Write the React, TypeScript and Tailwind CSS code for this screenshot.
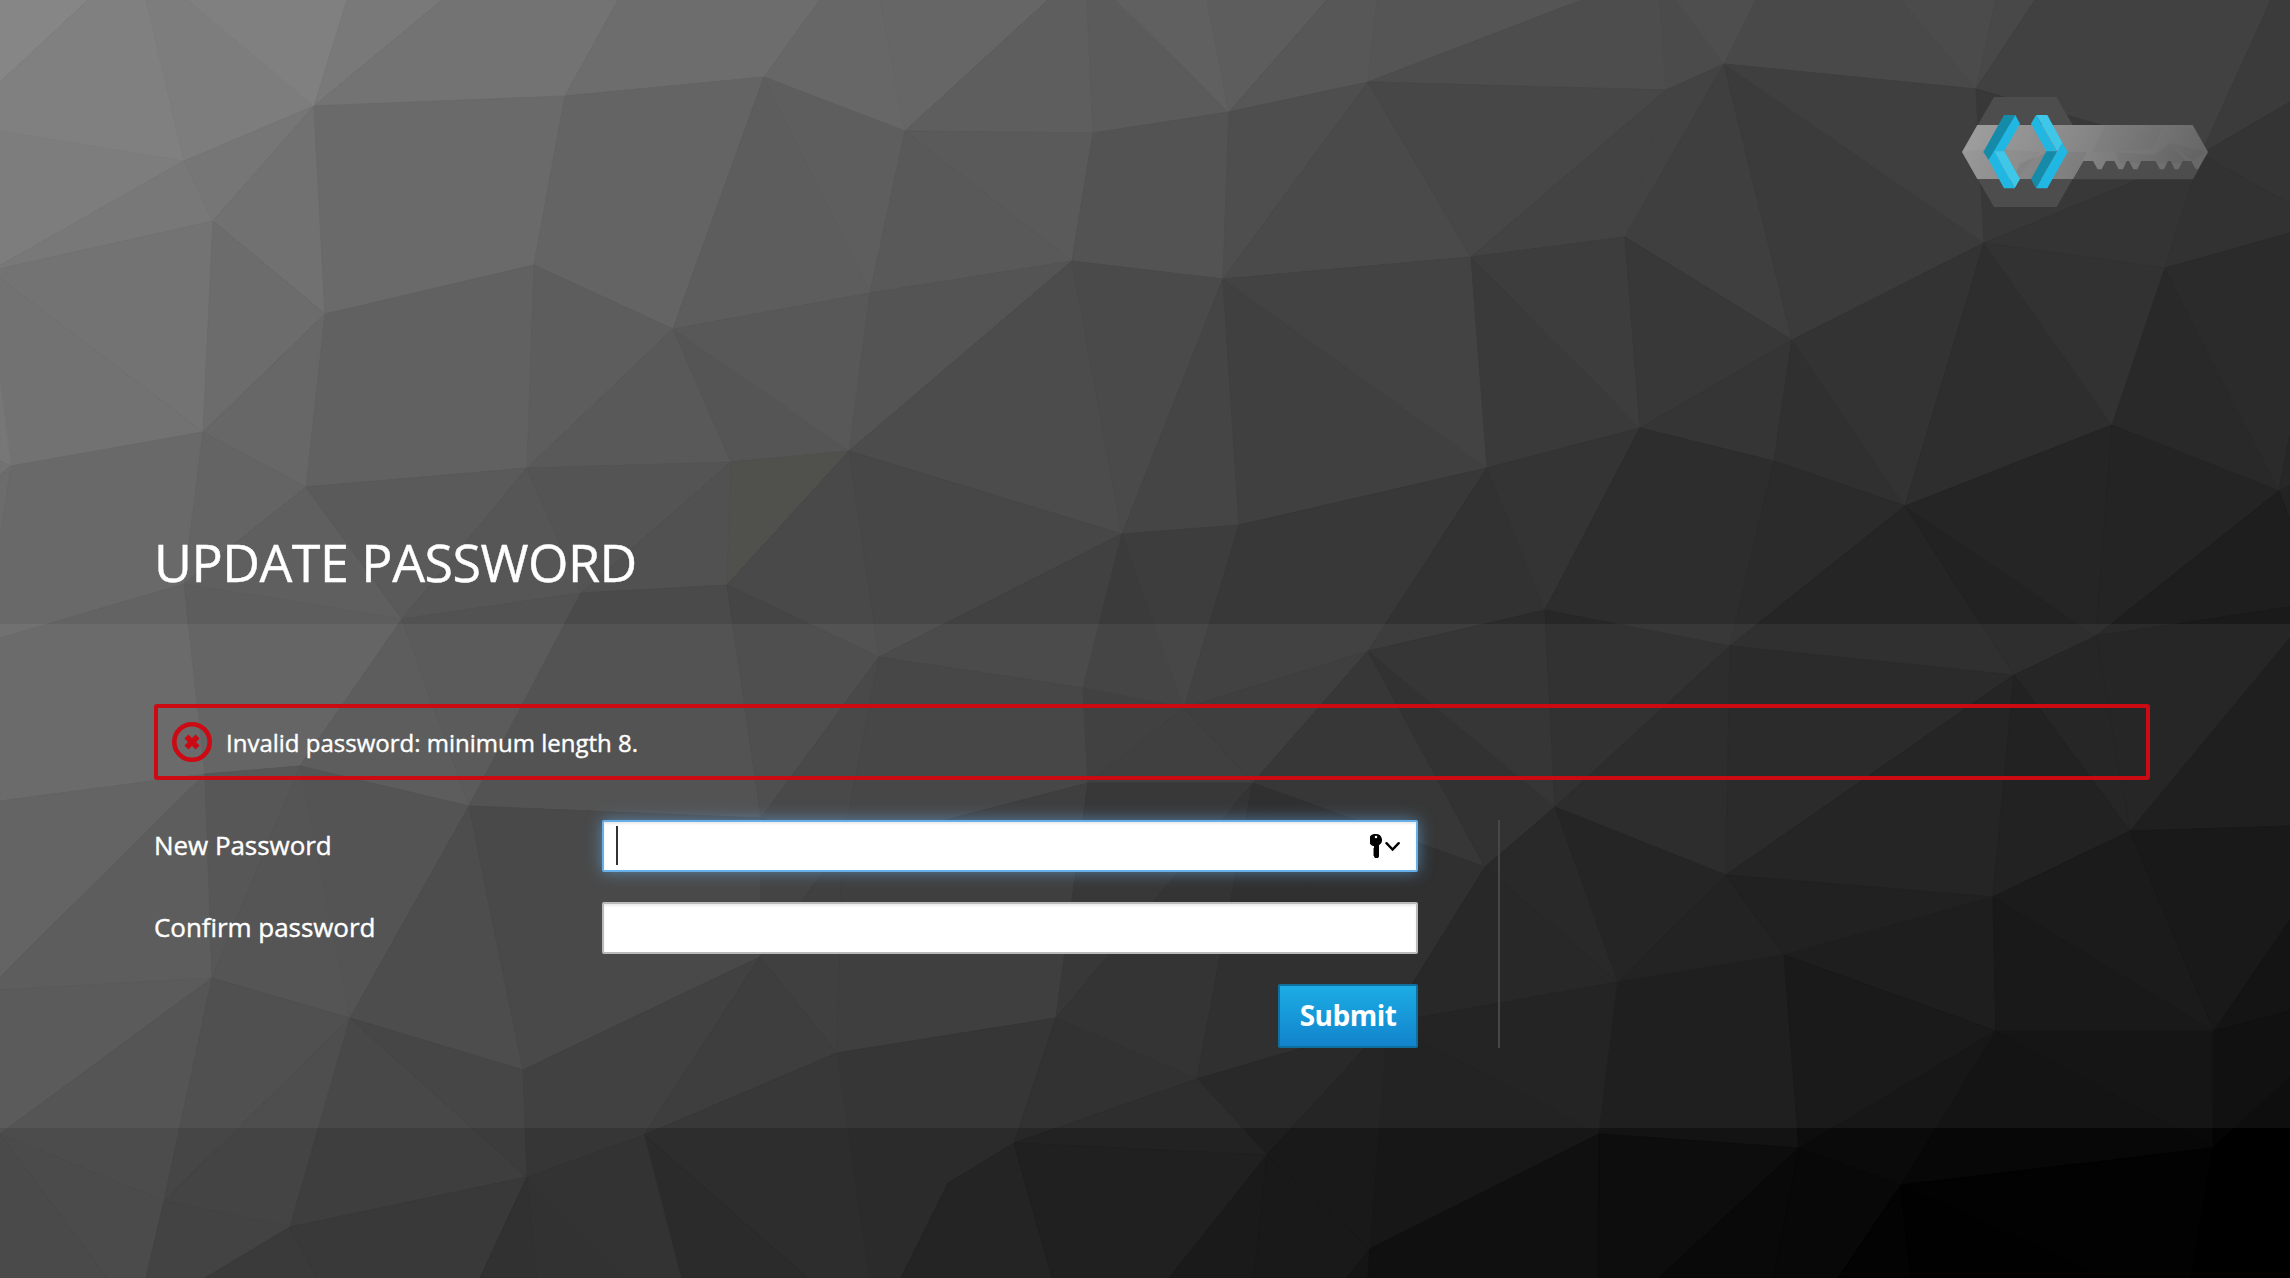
import React from "react";

const W = 2290;
const H = 1278;

// Mesh vertices of the low-poly backdrop.
const V: Record<string, [number, number]> = {
  B: [184, 161], C: [314, 106], D: [213, 221], E: [-10, 271], F: [325, 314], G: [565, 96], H: [764, 77],
  I: [534, 265], J: [673, 329], K: [203, 432], L: [11, 466], N: [306, 487], O: [527, 468], P: [731, 462],
  Q: [402, 619], R: [184, 584], T: [581, 593], U: [727, 585], W: [849, 451], X: [870, 293], Y: [879, 657],
  Z: [205, 774], AA: [300, 766], AB: [469, 806], AC: [761, 818], AD: [760, 957], AE: [523, 1070],
  AF: [212, 978], AG: [350, 1018], AH: [290, 1227], AI: [164, 1201], AJ: [0, 1134], AK: [527, 1177],
  AL: [644, 1135], AM: [837, 1053], AN: [842, 847], AO: [1088, 783], AP: [1083, 688], AQ: [1122, 534],
  AR: [1184, 708], AS: [1239, 525], AT: [1368, 651], AU: [1487, 468], AV: [1545, 610], AW: [1253, 783],
  AX: [1056, 1018], AY: [1197, 1079], AZ: [1485, 867], BA: [1555, 807], BB: [1618, 982], BC: [1388, 1023],
  BD: [1267, 1155], BE: [1370, 1249], BF: [1599, 1134], BG: [1014, 1143], BH: [948, 1183], BI: [1726, 875],
  BJ: [1730, 646], BK: [2014, 675], BL: [1905, 506], BM: [1774, 461], BN: [2096, 636], BO: [1993, 897],
  BP: [2130, 831], BQ: [1784, 955], BR: [1996, 1031], BS: [2214, 1031], BT: [1799, 1148], BU: [2213, 1148],
  BV: [1901, 1185], BW: [2112, 425], BX: [2279, 491], BY: [1792, 340], BZ: [1640, 428], CA: [1471, 257],
  CB: [1625, 237], CC: [1666, 90], CD: [1724, 64], CE: [1984, 243], CF: [2165, 268], CG: [1976, 89],
  CH: [2201, 154], CI: [1368, 82], CJ: [1229, 112], CK: [1223, 279], CL: [1072, 261], CM: [1093, 133],
  CN: [905, 131],
};

// One face per entry: vertex keys, then the grey level. Keys such as t88, l82,
// r102 and b146 are points on the top, left, right and bottom edges.
const FACES = `
t0 t88 l82:86|t88 t146 B l131 l82:80|t146 t188 C B:7d|t188 t347 C:80|t347 t442 C:79|t442 t618 G C:73
t618 t820 H G:6d|t820 t880 CN H:67|t880 t1048 CN:66|t1048 t1087 CM CN:5e|t1087 t1116 CJ CM:5b|t1116 t1207 CJ:60
t1207 t1327 CJ:5d|t1327 t1377 CI CJ:57|t1377 t1582 CI:55|t1582 t1660 CC CI:4d|t1660 t1676 CD CC:4b|t1676 t1756 CD:4e
t1756 t1901 CG CD:49|t1901 t1996 CG:4b|t1996 t2035 CG:48|t2035 t2271 CH CG:41|t2271 t2290 r102 CH:3b
l131 B E:7d|E B D:78|B C D:76|C F D:71|E D K:73|E K L l382:72|l382 L l461:77|l461 L l475:72|C G I F:6a|G H J I:64
H X J:5d|H CN X:5e|CN CL X:59|CN CM CL:5a|CM CJ CK CL:53|CJ CI CK:4e|CI CA CK:4a|CI CC CA:47|CC CB CA:43|CC CD CB:43
CD BY CB:3f|CD CE BY:3b|CD CG CE:3f|CG CH CE:38|CH CF CE:34|CH r102 r204:34|CH r204 r233 CF:32
D F K:6c|F N K:67|F I O N:61|I J O:5d|J P O:59|J W P:55|J X W:58|X CL W:54|CL AQ W:4c|CL CK AQ:4a|CK AS AQ:45
CK AU AS:40|CK CA AU:43|CA BZ AU:3a|CA CB BZ:3d|CB BY BZ:38|BY BM BZ:35|BY BL BM:30|BY CE BL:33|CE BW BL:2e|CE CF BW:32
CF BX BW:29|CF r233 r433 BX:2b|BX r433 r486:27|BX r486 r520:23
l475 L l539:6c|L K R l638 l539:69|K N R:64|N Q R:5f|N O Q:5a|O T Q:56|O P T:54|P U T:51|P W U:warm|W Y U:49|W AQ Y:47
Y AQ AP:41|AQ AR AP:3b|AQ AS AR:3d|AS AU AT AR:38|AU AV AT:32|AU BZ AV:34|BZ BM BJ AV:2d|BM BL BJ:2b|BL BK BJ:25
BL BN BK:22|BL BW BN:25|BW BX BN:24|BN BX r520 r607:1e|BN r607 r638 BP:1a|BN BP BK:1a
l638 R Z l801:63|R Q AA Z:5d|Q AB AA:54|Q T AB:52|T U AC AB:4a|U Y AC:45|Y AN AC:3f|Y AP AO AN:3d|AP AR AO:37
AR AW AO:35|AR AT AW:34|AT AZ AW:2c|AT BA AZ:27|AT AV BA:2b|AV BJ BA:27|BJ BI BA:21|BJ BK BI:1f|BK BO BI:19
BK BP BO:16|BP r638 r826:13
l801 Z l977:5b|Z AF l990 l977:54|Z AA AF:4e|AA AG AF:4c|AA AB AG:4b|AB AE AG:43|AB AC AD AE:3f|AC AN AD:3a
AN AM AD:35|AN AO AX AM:34|AO AW AX:2d|AW AY AX:29|AW BC AY:24|AW AZ BC:25|AZ BB BC:1c|AZ BA BB:1d|BA BI BB:19
BI BQ BB:17|BI BO BQ:15|BO BR BQ:11|BO BS BR:0c|BO BP BS:0e|BP r826 r920 BS:0c|BS r920 r1011:07
l990 AF AJ:52|AF AI AJ:4c|AF AG AI:46|AG AH AI:44|AG AK AH:3e|AG AE AK:3c|AE AD AL AK:36|AD AM AL:33
AM AX BG BH b901 b869:2b|AL AM b869 b808:2d|AL b808 b681:2b|AX AY BG:27|AY BC BD:1d|AY BD BG:22|BC BE BD:19
BC BF BE:17|BC BB BF:18|BB BQ BT BF:13|BQ BR BT:0d|BR BV BT:0a|BR BU BV:07|BR BS BU:08|BS r1011 r1077 BU:04
AJ AI b146 b107:4b|AJ b107 b0:4a|AI AH b205 b146:43|AH b205 b317:3a|AH AK b480 b317:39|AK b480 b537:31|AK b537 b628:32
AK AL b681 b628:33|BH BG b1052 b901:24|BG BD b1169 b1052:20|BD b1169 b1254:1a|BD BE b1347 b1254:19|BE b1347 b1368:15
BE BF b1598 b1368:10|BF BT b1659 b1598:0d|BT b1659 b1774:09|BT BV b1838 b1774:08|BV b1838 b1911:03|BV b1911 b2106:01
BV BU b2191 b2106:02|BU b2191 b2290 r1203:00|BU r1203 r1077:00`
  .trim()
  .split(/[|\n]/);

function point(key: string): string {
  if (V[key]) return V[key].join(",");
  const n = Number(key.slice(1));
  switch (key[0]) {
    case "t":
      return `${n},0`;
    case "l":
      return `0,${n}`;
    case "r":
      return `${W},${n}`;
    default:
      return `${n},${H}`;
  }
}

function Backdrop() {
  return (
    <svg className="absolute inset-0 h-full w-full" viewBox={`0 0 ${W} ${H}`} preserveAspectRatio="none" aria-hidden>
      {FACES.map((face) => {
        const [keys, tone] = face.split(":");
        const fill = tone === "warm" ? "#50504d" : `#${tone}${tone}${tone}`;
        return (
          <polygon key={keys} points={keys.split(" ").map(point).join(" ")} fill={fill} stroke={fill} strokeWidth={1} />
        );
      })}
    </svg>
  );
}

function Logo() {
  return (
    <svg className="h-[110px] w-[246px]" viewBox="66 51 738 330" role="img" aria-label="Keycloak">
      <defs>
        <linearGradient id="bar" x1="0" x2="1" y1="0" y2="0.1">
          <stop offset="0" stopColor="#a0a0a0" />
          <stop offset="0.45" stopColor="#8a8a8a" />
          <stop offset="1" stopColor="#686868" />
        </linearGradient>
        <clipPath id="barClip">
          <polygon points="112,135 758,135 804,216 758,297 112,297 66,216" />
        </clipPath>
      </defs>
      <polygon points="162,51 350,51 444,216 350,381 162,381 66,216" fill="#4d4d4d" />
      <polygon points="112,135 758,135 804,216 758,297 112,297 66,216" fill="url(#bar)" />
      <g clipPath="url(#barClip)">
        <polygon points="66,216 150,205 300,216 230,297 112,297" fill="#000" opacity="0.03" />
        <polygon points="240,250 330,215 440,216 400,297 220,297" fill="#000" opacity="0.05" />
        <polygon points="495,135 620,135 525,216 455,216" fill="#000" opacity="0.02" />
        <polygon points="620,135 670,135 640,205 525,216" fill="#000" opacity="0.02" />
        <polygon points="690,190 804,216 760,240 745,235" fill="#000" opacity="0.03" />
        <polygon points="525,216 640,225 690,190 745,250 540,250" fill="#000" opacity="0.04" />
      </g>
      <polygon
        fill="#4d4d4d"
        points="399,298 430,243 459,243 473,268 485,268 498,243 523,243 536,268 549,268 560,243 567,243 580,268 592,268 604,243 646,243 660,268 672,268 684,243 692,243 704,268 716,268 728,243 754,243 766,266 776,268 758,298"
      />
      <polygon points="192,105 226,105 163,216 146,240 130,216" fill="#158aa9" />
      <polygon points="226,105 240,131 193,213 163,216 146,240" fill="#20b8e3" />
      <polygon points="146,240 163,214 224,325 192,325" fill="#20b8e3" />
      <polygon points="163,214 193,214 240,297 224,325" fill="#3fc7e9" />
      <polygon points="288,105 322,105 367,188 352,214" fill="#3fc7e9" />
      <polygon points="273,131 288,105 350,214 319,214" fill="#20b8e3" />
      <polygon points="319,214 352,214 288,325 273,298" fill="#158aa9" />
      <polygon points="367,188 383,216 322,325 288,325 352,214" fill="#20b8e3" />
    </svg>
  );
}

function ErrorIcon() {
  return (
    <svg className="size-10 shrink-0" viewBox="0 0 40 40" aria-hidden>
      <circle cx="20" cy="20" r="17.7" fill="none" stroke="#cc0a14" strokeWidth="4.6" />
      <path d="M14.4 14.4 25.6 25.6M25.6 14.4 14.4 25.6" stroke="#cc0a14" strokeWidth="5.6" />
    </svg>
  );
}

function AutofillIcon() {
  return (
    <svg className="h-6 w-[30px]" viewBox="0 0 30 24" aria-hidden>
      <path
        fillRule="evenodd"
        d="M6 0a6 6 0 0 1 3 11.2V21.5a2.500 2.500 0 0 1-5 .5l-.9-1 .9-1-.9-1 .9-1-.9-1 .9-1-.9-1 .9-1v-1.800A6 6 0 0 1 6 0Zm0 1.700a1.300 1.300 0 1 0 0 2.600 1.300 1.300 0 0 0 0-2.600Z"
      />
      <path d="M16.500 9.200 22.600 15.500 28.700 9.200" fill="none" stroke="#000" strokeWidth="2.400" strokeLinecap="round" />
    </svg>
  );
}

function Row({ id, label, children }: { id: string; label: string; children: React.ReactNode }) {
  return (
    <div className="flex h-[52px] items-center">
      <label htmlFor={id} className="w-[448px] pb-px text-[26px] leading-[51px] tracking-[-0.05px]">
        {label}
      </label>
      {children}
    </div>
  );
}

export default function App() {
  return (
    <div className="relative h-[1278px] w-full overflow-hidden bg-black font-['Open_Sans',sans-serif] text-white [-webkit-text-stroke:0.4px_white]">
      <Backdrop />
      <div className="relative flex h-full flex-col">
        <header className="flex h-[624px] flex-col justify-between">
          <div className="flex justify-end pt-[97px] pr-[82px]">
            <Logo />
          </div>
          <h1 className="mb-[26px] pl-[154px] text-[52px] leading-[72px] tracking-[-0.5px] whitespace-nowrap uppercase">
            Update password
          </h1>
        </header>

        <main className="h-[504px] bg-white/[0.055] pt-20 pr-[140px] pl-[154px]">
          <div role="alert" className="flex h-[76px] items-center rounded-[3px] border-4 border-[#cc0a14] pl-[14px]">
            <ErrorIcon />
            <span className="pt-[2px] pl-[14px] text-[24px] leading-8">Invalid password: minimum length 8.</span>
          </div>

          <div className="mt-10 flex h-[228px]">
            <form className="flex w-[1264px] flex-col" onSubmit={(e) => e.preventDefault()}>
              <Row id="new" label="New Password">
                <div className="relative h-full flex-1">
                  <input
                    id="new"
                    type="password"
                    className="h-full w-full rounded-[2px] border-2 border-[#66afe9] bg-white px-3 text-black shadow-[inset_0_2px_2px_rgba(0,0,0,0.075),0_0_16px_rgba(102,175,233,0.6)] outline-none"
                  />
                  <span className="absolute top-[6px] left-[14px] h-[39px] w-[2px] bg-[#333]" />
                  <span className="absolute top-[14px] right-[18px]">
                    <AutofillIcon />
                  </span>
                </div>
              </Row>
              <div className="h-[30px]" />
              <Row id="confirm" label="Confirm password">
                <input
                  id="confirm"
                  type="password"
                  className="h-full flex-1 rounded-[2px] border-2 border-[#bababa] bg-white px-3 text-black shadow-[inset_0_2px_2px_rgba(0,0,0,0.075)] outline-none"
                />
              </Row>
              <button
                type="submit"
                className="mt-[30px] h-16 w-[140px] self-end rounded-[2px] border-2 border-[#0f6f9f] bg-linear-to-b from-[#1cace4] to-[#1384cc] pb-[2px] text-[28px] leading-none font-bold tracking-[-0.5px] [-webkit-text-stroke:0]"
              >
                Submit
              </button>
            </form>
            <div className="ml-20 w-[2px] bg-[#474747]" />
          </div>
        </main>
      </div>
    </div>
  );
}
